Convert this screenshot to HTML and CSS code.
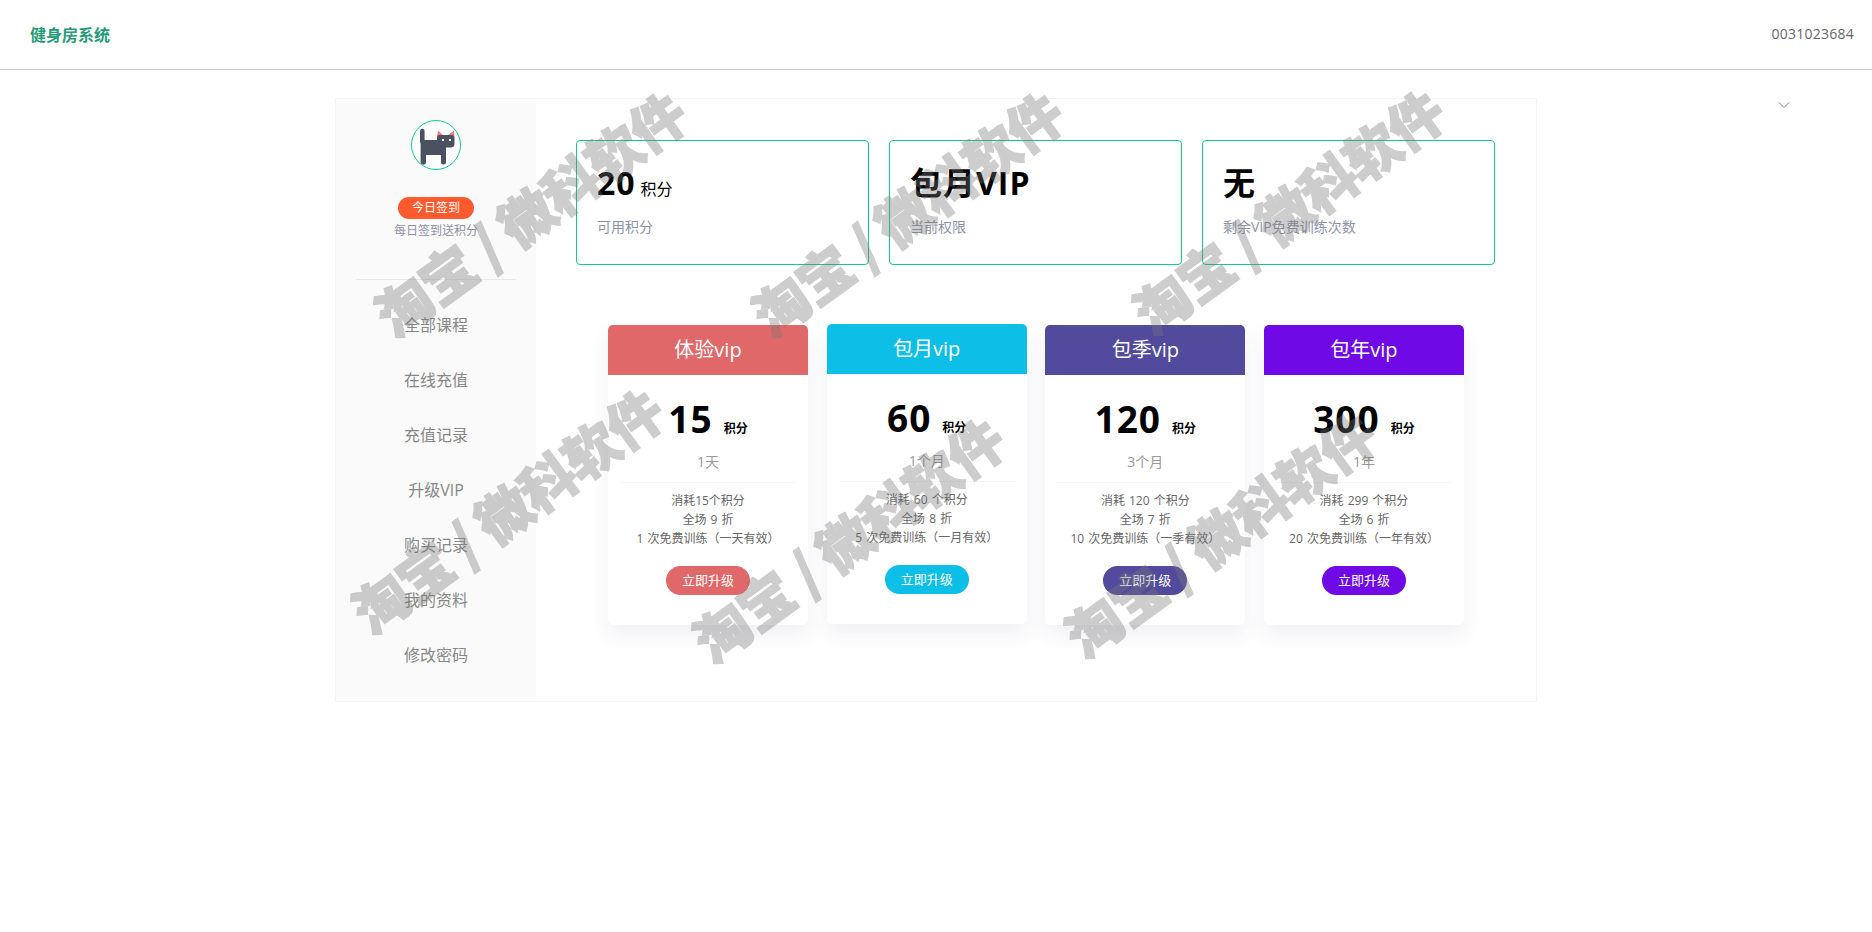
FILE: index.html
```html
<!doctype html>
<html>
<head>
<meta charset="utf-8">
<title>健身房系统</title>
<link rel="stylesheet" href="styles.css">
</head>

<body>
<header class="top">
	<a class="logo" href="javascript:;">健身房系统</a>
	<span class="uid">0031023684</span>
</header>

<svg class="arrow" width="12" height="8" viewBox="0 0 12 8"><path d="M1 1.5L6 6.500L11 1.500" fill="none" stroke="#777" stroke-width="1"/></svg>

<div class="panel">
	<aside class="side">
		<div class="avatar">
			<svg width="48" height="48" viewBox="0 0 48 48">
				<path d="M25 15L26 9.500L31 14Z M36 14L42 9.500L42.500 15Z" fill="#f47c7c"/>
				<path d="M8 10a2.300 2.300 0 0 1 4.600 0V19H25V16Q25 14 27 14H40Q42.500 14 42.500 16.500V23Q42.500 26 39 26.500H34V41a2.500 2.500 0 0 1-5 0V34H14V41a2.700 2.700 0 0 1-5.400 0V23L8 21Z" fill="#4a5160"/>
				<rect x="30" y="18" width="2" height="2" fill="#fff"/>
				<rect x="37" y="18" width="2" height="2" fill="#fff"/>
			</svg>
		</div>
		<a class="sign" href="javascript:;">今日签到</a>
		<p class="sign_tip">每日签到送积分</p>
		<ul class="menu">
			<li>全部课程</li>
			<li>在线充值</li>
			<li>充值记录</li>
			<li>升级VIP</li>
			<li>购买记录</li>
			<li>我的资料</li>
			<li>修改密码</li>
		</ul>
	</aside>

	<main class="main">
		<div class="stats">
			<div class="stat">
				<div class="stat_val">20<small>积分</small></div>
				<div class="stat_txt">可用积分</div>
			</div>
			<div class="stat">
				<div class="stat_val">包月VIP</div>
				<div class="stat_txt">当前权限</div>
			</div>
			<div class="stat">
				<div class="stat_val">无</div>
				<div class="stat_txt">剩余VIP免费训练次数</div>
			</div>
		</div>

		<div class="plans">
			<div class="plan red">
				<h3>体验vip</h3>
				<div class="price">15<small>积分</small></div>
				<div class="term">1天</div>
				<ul>
					<li>消耗15个积分</li>
					<li>全场 9 折</li>
					<li>1 次免费训练（一天有效）</li>
				</ul>
				<a class="buy" href="javascript:;">立即升级</a>
			</div>
			<div class="plan blue lift">
				<h3>包月vip</h3>
				<div class="price">60<small>积分</small></div>
				<div class="term">1个月</div>
				<ul>
					<li>消耗 60 个积分</li>
					<li>全场 8 折</li>
					<li>5 次免费训练（一月有效）</li>
				</ul>
				<a class="buy" href="javascript:;">立即升级</a>
			</div>
			<div class="plan indigo">
				<h3>包季vip</h3>
				<div class="price">120<small>积分</small></div>
				<div class="term">3个月</div>
				<ul>
					<li>消耗 120 个积分</li>
					<li>全场 7 折</li>
					<li>10 次免费训练（一季有效）</li>
				</ul>
				<a class="buy" href="javascript:;">立即升级</a>
			</div>
			<div class="plan violet">
				<h3>包年vip</h3>
				<div class="price">300<small>积分</small></div>
				<div class="term">1年</div>
				<ul>
					<li>消耗 299 个积分</li>
					<li>全场 6 折</li>
					<li>20 次免费训练（一年有效）</li>
				</ul>
				<a class="buy" href="javascript:;">立即升级</a>
			</div>
		</div>
	</main>
</div>

<div class="wm w1">淘宝 / 微科软件</div>
<div class="wm w2">淘宝 / 微科软件</div>
<div class="wm w3">淘宝 / 微科软件</div>
<div class="wm w4">淘宝 / 微科软件</div>
<div class="wm w5">淘宝 / 微科软件</div>
<div class="wm w6">淘宝 / 微科软件</div>
</body>
</html>
```
FILE: styles.css
```css
*{
	margin:0; padding:0; list-style:none; box-sizing:border-box;
}
html,body{
	height:100%;
}
body{
	background:#fff; color:#333; overflow:hidden; position:relative;
	font-family:"Open Sans","Noto Sans CJK SC",sans-serif;
}
a{
	text-decoration:none;
}

.top{
	height:70px; padding:0 18px 2px 30px; border-bottom:1px solid #ccc;
	display:flex; align-items:center; justify-content:space-between;
}
	.logo{
		font-size:16px; font-weight:bold; color:#259b78;
	}
	.uid{
		font-size:14px; color:#666; letter-spacing:.25px;
	}
.arrow{
	position:absolute; left:1778px; top:101px;
}

.panel{
	width:1202px; height:604px; margin:28px auto 0;
	border:1px solid #f5f5f5; display:flex;
}

.side{
	width:200px; background:#fafafa; text-align:center;
	display:flex; flex-direction:column; align-items:center;
	padding-top:21px;
}
	.avatar{
		width:50px; height:50px; border:1px solid #0fcb8e; border-radius:50%;
		background:#fff; overflow:hidden;
	}
		.avatar svg{
			display:block;
		}
	.sign{
		width:76px; height:22px; line-height:22px; margin-top:27px;
		background:#ff5a2e; border-radius:11px;
		font-size:12px; color:#fff;
	}
	.sign_tip{
		margin-top:2px; line-height:20px; font-size:12px; color:#8c93a8;
	}
	.menu{
		width:160px; margin-top:38px; padding-top:18px;
		border-top:1px solid #e8e8e8;
	}
		.menu li{
			height:55px; line-height:55px; font-size:16px; color:#888;
		}

.main{
	flex:1; padding:41px 0 0 40px;
}
.stats{
	display:grid; grid-template-columns:repeat(3,293px); column-gap:20px;
}
	.stat{
		height:125px; padding:19px 20px 0; border:1px solid #0fcb8e; border-radius:4px;
	}
	.stat_val{
		height:46px; line-height:46px; font-size:32px; font-weight:bold; color:#000;
		letter-spacing:1px;
	}
		.stat_val small{
			margin-left:5px; font-size:16px; font-weight:normal; letter-spacing:0;
		}
	.stat_txt{
		margin-top:11px; line-height:20px; font-size:14px; color:#8c93a8;
	}

.plans{
	display:flex; gap:18.67px; margin:60px 0 0 32px;
}
	.plan{
		width:200px; height:300px; background:#fff; border-radius:5px;
		box-shadow:0 10px 20px rgba(60,70,110,.08);
		text-align:center;
	}
	.lift{
		transform:translateY(-1px);
	}
		.plan h3{
			height:50px; line-height:50px; border-radius:5px 5px 0 0;
			font-size:20px; font-weight:normal; color:#fff;
		}
		.price{
			margin-top:18px; height:50px; line-height:52px;
			font-size:37px; font-weight:bold; color:#000; letter-spacing:1px;
		}
			.price small{
				margin-left:11px; font-size:12px; letter-spacing:0;
			}
		.term{
			margin-top:9px; line-height:20px; font-size:14px; color:#999;
		}
		.plan ul{
			margin:10px 12px 0; padding-top:8px; border-top:1px solid #f5f5f5;
		}
			.plan li{
				line-height:19px; font-size:12px; color:#666; white-space:nowrap; word-spacing:1px;
			}
		.buy{
			display:block; width:84px; height:29px; line-height:29px; margin:18px auto 0;
			border-radius:15px; font-size:13px; color:#fff;
		}

.red h3,.red .buy{ background:#e16868; }
.blue h3,.blue .buy{ background:#0dbfe6; }
.indigo h3,.indigo .buy{ background:#514a9d; }
.violet h3,.violet .buy{ background:#6f0ae6; }

/* watermark lying over the whole page */
.wm{
	position:absolute; width:500px; margin:-40px 0 0 -250px;
	line-height:80px; text-align:center; white-space:nowrap;
	font-size:55px; font-weight:900; color:#787878; opacity:.36;
	-webkit-text-stroke:1.5px #787878; letter-spacing:-1px;
	font-family:"Noto Sans CJK SC",sans-serif;
	transform:rotate(-36deg); pointer-events:none;
}
.w1{ left:529px; top:212px; }
.w2{ left:906px; top:212px; }
.w3{ left:1287px; top:210px; }
.w4{ left:506px; top:509px; }
.w5{ left:847px; top:538px; }
.w6{ left:1219px; top:533px; }
```
